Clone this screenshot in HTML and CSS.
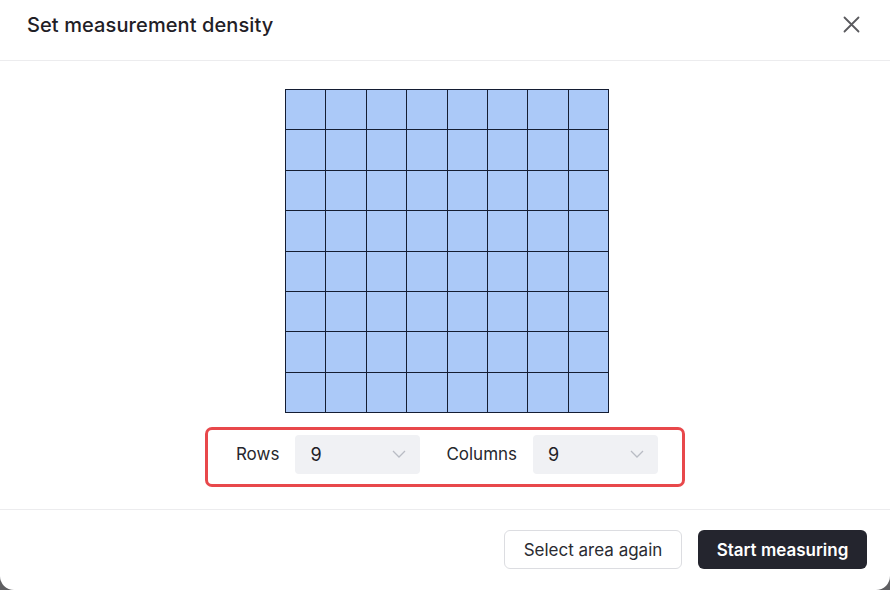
FILE: index.html
```html
<!DOCTYPE html>
<html lang="en">
<head>
  <meta charset="UTF-8">
  <title>Set measurement density</title>
  <link rel="stylesheet" href="styles.css">
</head>
<body>
  <div class="dialog">
    <div class="dialog-header">
      <h2 class="dialog-title">Set measurement density</h2>
      <button class="close-btn" aria-label="Close">
        <svg width="17" height="17" viewBox="0 0 17 17" fill="none" stroke="#5a5a5e" stroke-width="1.8" stroke-linecap="round">
          <path d="M1.5 1.5L15.5 15.5M15.5 1.5L1.5 15.5"/>
        </svg>
      </button>
    </div>

    <div class="dialog-body">
      <div class="grid-preview" id="grid-preview"></div>

      <div class="density-controls">
        <label class="field-label">Rows</label>
        <div class="select">
          <span>9</span>
          <svg width="14" height="8" viewBox="0 0 14 8" fill="none" stroke="#b9bcc4" stroke-width="1.3"><path d="M1 1L7 7L13 1"/></svg>
        </div>
        <label class="field-label label-columns">Columns</label>
        <div class="select">
          <span>9</span>
          <svg width="14" height="8" viewBox="0 0 14 8" fill="none" stroke="#b9bcc4" stroke-width="1.3"><path d="M1 1L7 7L13 1"/></svg>
        </div>
      </div>
    </div>

    <div class="dialog-footer">
      <button class="btn btn-secondary">Select area again</button>
      <button class="btn btn-primary">Start measuring</button>
    </div>
  </div>

  <script>
    // build the 8x8 preview cells
    const grid = document.getElementById('grid-preview');
    for (let i = 0; i < 64; i++) {
      const cell = document.createElement('div');
      cell.className = 'cell';
      grid.appendChild(cell);
    }
  </script>
</body>
</html>
```

FILE: styles.css
```css
/* Global */
body {
  margin: 0;
  padding: 0;
  background-color: #5f5f62;
  font-family: 'Inter', 'Noto Sans', sans-serif;
  color: #1f2026;
}

/* Dialog */
.dialog {
  width: 890px;
  height: 590px;
  background-color: #fff;
  border-radius: 0 0 14px 14px;
  display: flex;
  flex-direction: column;
  overflow: hidden;
}

.dialog-header {
  flex-shrink: 0;
  display: flex;
  align-items: center;
  justify-content: space-between;
  padding: 0 30px 0 27px;
  border-bottom: 1px solid #ececee;
  box-sizing: border-box;
  height: 61px;
}

.dialog-title {
  margin: 0 0 10px;
  font-size: 20px;
  font-weight: 500;
  letter-spacing: 0.1px;
}

.close-btn {
  background: none;
  border: none;
  padding: 0;
  margin: 0 0 12px 0;
  cursor: pointer;
  display: flex;
}

.dialog-body {
  flex: 1;
  display: flex;
  flex-direction: column;
  align-items: center;
  padding-top: 28px;
  border-bottom: 1px solid #ececee;
}

/* Grid preview */
.grid-preview {
  width: 324px;
  height: 324px;
  box-sizing: border-box;
  margin-left: 4px;
  padding: 1px;
  display: grid;
  grid-template-columns: repeat(8, 1fr);
  grid-template-rows: repeat(8, 1fr);
  gap: 1px;
  background-color: #141d33;
}

.cell {
  background-color: #abc9f8;
}

/* Rows / columns controls */
.density-controls {
  margin-top: 14px;
  height: 60px;
  box-sizing: border-box;
  border: 3px solid #e8484b;
  border-radius: 7px;
  display: flex;
  align-items: center;
  padding: 0 24px 6px 28px;
}

.field-label {
  font-size: 17px;
  color: #26272d;
  margin-right: 16px;
}

.label-columns {
  margin-left: 26px;
  margin-right: 16px;
}

.select {
  width: 125px;
  height: 39px;
  box-sizing: border-box;
  background-color: #f0f1f4;
  border-radius: 4px;
  display: flex;
  align-items: center;
  justify-content: space-between;
  padding: 0 14px 0 15px;
  font-size: 18px;
  color: #1f2026;
}

/* Footer */
.dialog-footer {
  height: 80px;
  flex-shrink: 0;
  display: flex;
  justify-content: flex-end;
  align-items: flex-start;
  gap: 16px;
  padding: 20px 23px 0 0;
  box-sizing: border-box;
}

.btn {
  height: 39px;
  border-radius: 6px;
  font-family: inherit;
  font-size: 17px;
  cursor: pointer;
  padding: 0 17px;
}

.btn-secondary {
  width: 178px;
  background-color: #fff;
  border: 1px solid #dcdde1;
  color: #2a2b31;
}

.btn-primary {
  width: 169px;
  background-color: #24252e;
  border: none;
  color: #fff;
  font-weight: 600;
}
```
